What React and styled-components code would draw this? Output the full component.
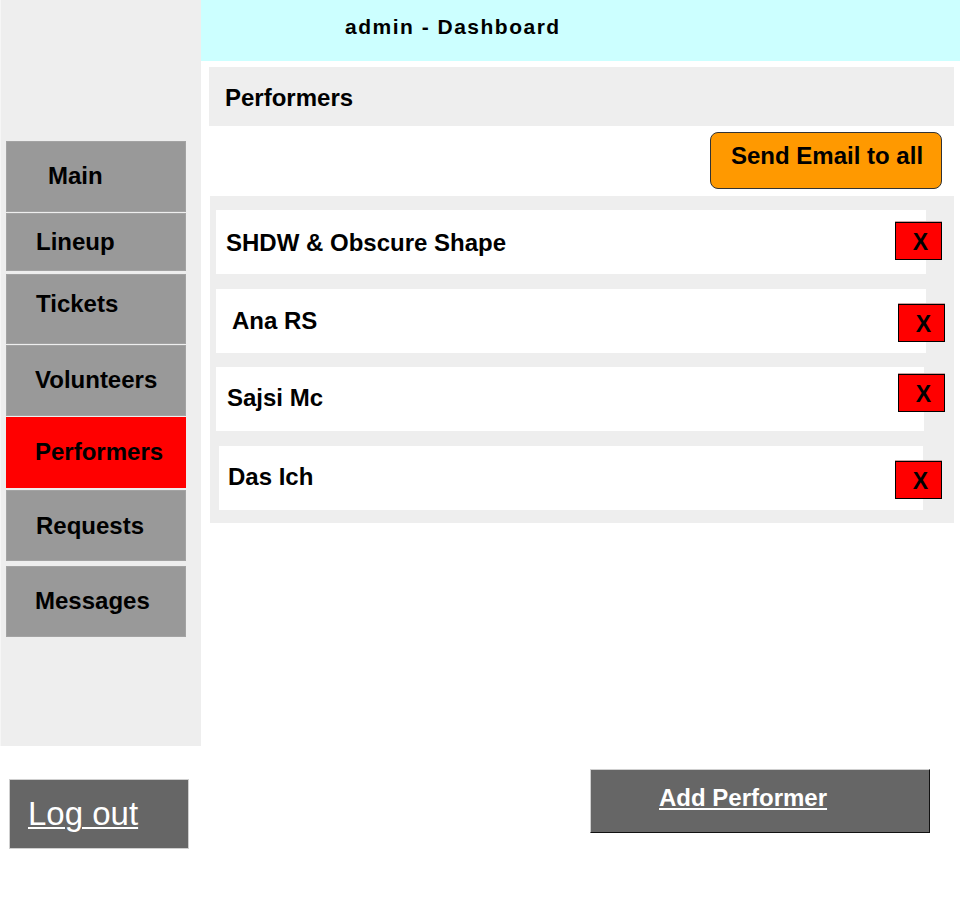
import React from "react";
import styled, { createGlobalStyle } from "styled-components";

const GlobalStyle = createGlobalStyle`
  html, body {
    margin: 0;
    padding: 0;
    background: #ffffff;
    font-family: "Liberation Sans", Arial, sans-serif;
    color: #000000;
  }
  * { box-sizing: border-box; }
`;

// === Layout ===
const Page = styled.div`
  width: 960px;
  height: 900px;
  display: flex;
  flex-direction: column;
`;

const Top = styled.div`
  display: flex;
  align-items: flex-start;
`;

const Sidebar = styled.nav`
  width: 201px;
  height: 746px;
  flex-shrink: 0;
  background: #eeeeee;
  border-left: 1px solid #f6f6f6;
  padding: 141px 0 0 5px;
  display: flex;
  flex-direction: column;
`;

const NavItem = styled.a`
  display: block;
  width: 180px;
  height: ${({ h }) => h}px;
  margin-top: ${({ gap }) => gap}px;
  padding: ${({ pt }) => pt}px 0 0 ${({ pl }) => pl}px;
  background: ${({ active }) => (active ? "#ff0000" : "#999999")};
  border: 1px solid ${({ active }) => (active ? "#ff0000" : "#a3a3a3")};
  font-size: 24px;
  font-weight: 700;
  line-height: 27px;
  color: #000000;
  text-decoration: none;
`;

const MainColumn = styled.main`
  flex: 1;
  display: flex;
  flex-direction: column;
`;

const Header = styled.header`
  height: 61px;
  background: #ccffff;
  padding: 14px 0 0 144px;
  font-size: 21px;
  font-weight: 700;
  letter-spacing: 1.5px;
  line-height: 25px;
`;

const Content = styled.section`
  padding: 6px 6px 0 8px;
  display: flex;
  flex-direction: column;
`;

const TitleBar = styled.h2`
  margin: 0;
  height: 59px;
  background: #eeeeee;
  padding: 17px 0 0 16px;
  font-size: 24px;
  font-weight: 700;
  line-height: 27px;
`;

const Actions = styled.div`
  display: flex;
  justify-content: flex-end;
  padding: 6px 12px 0 0;
`;

const EmailButton = styled.button`
  width: 232px;
  height: 57px;
  background: #ff9900;
  border: 1px solid #333333;
  border-radius: 8px;
  padding: 9px 0 19px 20px;
  text-align: left;
  font-family: inherit;
  font-size: 24px;
  font-weight: 700;
  line-height: 27px;
  color: #000000;
  cursor: pointer;
`;

const List = styled.div`
  margin: 7px 0 0 1px;
  background: #eeeeee;
  padding: 14px 0 13px 6px;
  display: flex;
  flex-direction: column;
  gap: 15px;
`;

const Row = styled.div`
  display: flex;
  align-items: flex-start;
  margin-top: ${({ mt }) => mt || 0}px;
`;

const Card = styled.div`
  width: ${({ w }) => w}px;
  height: 64px;
  margin-left: ${({ ml }) => ml || 0}px;
  background: #ffffff;
  padding: ${({ pt }) => pt}px 0 0 ${({ pl }) => pl}px;
  font-size: 24px;
  font-weight: 700;
  line-height: 27px;
`;

const DeleteButton = styled.button`
  width: 47px;
  height: 38px;
  margin: ${({ dy }) => dy}px 0 0 ${({ dx }) => dx}px;
  background: #ff0000;
  border: 1px solid #000000;
  box-shadow: 0 -1px 0 #c9a0a0;
  padding: 2px 0 0 4px;
  font-family: inherit;
  font-size: 23px;
  font-weight: 700;
  line-height: 26px;
  color: #000000;
  cursor: pointer;
`;

const Footer = styled.footer`
  display: flex;
  align-items: flex-start;
  padding-top: 23px;
`;

const LogoutButton = styled.a`
  display: block;
  width: 180px;
  height: 70px;
  margin: 10px 0 0 9px;
  background: #666666;
  border: 1px solid #cfcfcf;
  padding: 15px 0 0 18px;
  font-size: 33px;
  line-height: 37px;
  color: #ffffff;
  text-decoration: underline;
  text-decoration-thickness: 2px;
  text-underline-offset: 2px;
`;

const AddButton = styled.a`
  display: block;
  width: 340px;
  height: 64px;
  margin-left: 401px;
  background: #666666;
  border: 1px solid #111111;
  border-top-color: #cfcfcf;
  border-left-color: #cfcfcf;
  padding: 14px 0 0 68px;
  font-size: 24px;
  font-weight: 700;
  line-height: 27px;
  color: #ffffff;
  text-decoration: underline;
  text-decoration-thickness: 2px;
  text-underline-offset: 2px;
`;

const navItems = [
  { label: "Main", h: 71, gap: 0, pt: 20, pl: 41 },
  { label: "Lineup", h: 58, gap: 1, pt: 14, pl: 29 },
  { label: "Tickets", h: 70, gap: 3, pt: 15, pl: 29 },
  { label: "Volunteers", h: 71, gap: 1, pt: 20, pl: 28 },
  { label: "Performers", h: 71, gap: 1, pt: 20, pl: 28, active: true },
  { label: "Requests", h: 71, gap: 2, pt: 21, pl: 29 },
  { label: "Messages", h: 71, gap: 5, pt: 20, pl: 28 },
];

const performers = [
  { name: "SHDW & Obscure Shape", w: 710, ml: 0, pl: 10, pt: 19, dx: -31, dy: 12 },
  { name: "Ana RS", w: 710, ml: 0, pl: 16, pt: 18, dx: -28, dy: 15 },
  { name: "Sajsi Mc", w: 708, ml: 0, pl: 11, pt: 17, dx: -26, dy: 7, mt: -1 },
  { name: "Das Ich", w: 704, ml: 3, pl: 9, pt: 17, dx: -28, dy: 15 },
];

export default function App() {
  return (
    <>
      <GlobalStyle />
      <Page>
        <Top>
          <Sidebar>
            {navItems.map((item) => (
              <NavItem
                key={item.label}
                href="#"
                h={item.h}
                gap={item.gap}
                pt={item.pt}
                pl={item.pl}
                active={item.active}
              >
                {item.label}
              </NavItem>
            ))}
          </Sidebar>

          <MainColumn>
            <Header>admin - Dashboard</Header>
            <Content>
              <TitleBar>Performers</TitleBar>
              <Actions>
                <EmailButton>Send Email to all</EmailButton>
              </Actions>
              <List>
                {performers.map((p) => (
                  <Row key={p.name} mt={p.mt}>
                    <Card w={p.w} ml={p.ml} pl={p.pl} pt={p.pt}>
                      {p.name}
                    </Card>
                    <DeleteButton dx={p.dx} dy={p.dy}>X</DeleteButton>
                  </Row>
                ))}
              </List>
            </Content>
          </MainColumn>
        </Top>

        <Footer>
          <LogoutButton href="#">Log out</LogoutButton>
          <AddButton href="#">Add Performer</AddButton>
        </Footer>
      </Page>
    </>
  );
}
